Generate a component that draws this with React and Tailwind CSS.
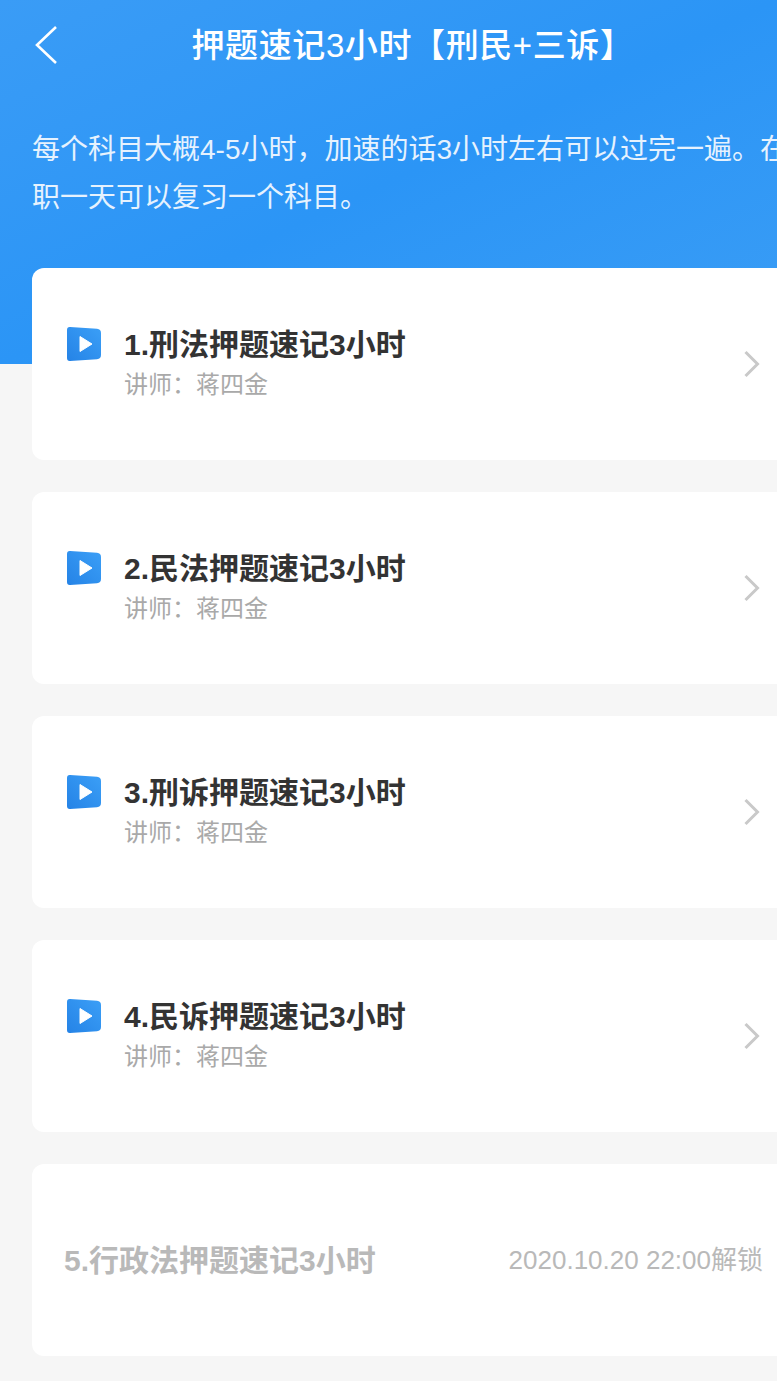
const font = { fontFamily: '"Liberation Sans","Noto Sans CJK SC",sans-serif' };

function PlayIcon() {
  return (
    <svg width="36" height="36" viewBox="0 0 36 36" className="shrink-0">
      <defs>
        <linearGradient id="pg" x1="0" y1="1" x2="1" y2="0">
          <stop offset="0" stopColor="#2583e6" />
          <stop offset="1" stopColor="#3b9ff7" />
        </linearGradient>
      </defs>
      <path d="M4 1 L31 2.8 Q35 3.1 35 7 L35 29 Q35 32.9 31 33.2 L4 35 Q1 35.2 1 32 L1 4 Q1 0.8 4 1 Z" fill="url(#pg)" />
      <path d="M14 10.5 L26 18 L14 25.5 Z" fill="#fff" strokeLinejoin="round" stroke="#fff" strokeWidth="1" />
    </svg>
  );
}

function Chevron() {
  return (
    <svg width="18" height="28" viewBox="0 0 18 28" className="shrink-0">
      <path d="M2.5 2 L14.5 14 L2.5 26" fill="none" stroke="#c9c9c9" strokeWidth="3" />
    </svg>
  );
}

function Course({ title }) {
  return (
    <div className="ml-8 h-[192px] bg-white rounded-l-xl flex items-center pl-[34px] pr-4 shrink-0">
      <div className="-mt-[40px]"><PlayIcon /></div>
      <div className="ml-[22px] flex-1 mt-[2px]">
        <div className="text-[30px] leading-[40px] font-bold text-[#333]">{title}</div>
        <div className="text-[24px] leading-[40px] text-[#a9a9a9]">讲师：蒋四金</div>
      </div>
      <Chevron />
    </div>
  );
}

export default function App() {
  return (
    <div style={font} className="w-[777px] h-[1381px] overflow-hidden bg-[#f6f6f6]">
      <div className="h-[364px] bg-gradient-to-br from-[#3a9cf6] via-[#2b95f6] to-[#3a9df5] text-white">
        <div className="h-[92px] relative flex items-center justify-center pl-[48px]">
          <svg width="26" height="40" viewBox="0 0 26 40" className="absolute left-[34px] top-[25px]">
            <path d="M22 2 L3 20 L22 38" fill="none" stroke="#fff" strokeWidth="2.6" />
          </svg>
          <div className="text-[33px] font-medium tracking-[0.6px] whitespace-nowrap">押题速记3小时【刑民+三诉】</div>
        </div>
        <div className="pl-8 pt-[34px] text-[28px] leading-[48px] whitespace-nowrap text-[#e6f2fe]">
          <div>每个科目大概4-5小时，加速的话3小时左右可以过完一遍。在</div>
          <div>职一天可以复习一个科目。</div>
        </div>
      </div>
      <div className="-mt-[96px] relative flex flex-col gap-8">
        <Course title="1.刑法押题速记3小时" />
        <Course title="2.民法押题速记3小时" />
        <Course title="3.刑诉押题速记3小时" />
        <Course title="4.民诉押题速记3小时" />
        <div className="ml-8 h-[192px] bg-white rounded-l-xl flex items-center justify-between pl-8 pr-[14px] shrink-0">
          <div className="text-[30px] font-bold text-[#b9b9b9]">5.行政法押题速记3小时</div>
          <div className="text-[26px] text-[#b9b9b9]">2020.10.20 22:00解锁</div>
        </div>
      </div>
    </div>
  );
}
